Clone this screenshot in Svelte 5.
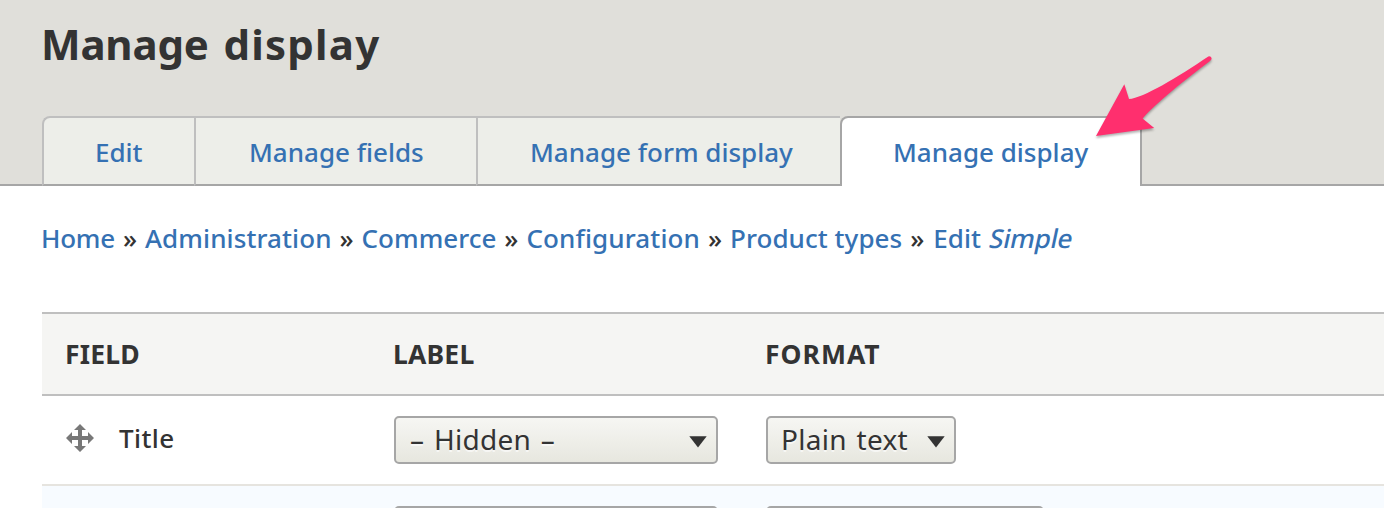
<script>
  const tabs = [
    { name: 'Edit', kind: 'edit' },
    { name: 'Manage fields', kind: 'fields' },
    { name: 'Manage form display', kind: 'form' },
    { name: 'Manage display', kind: 'display' }
  ];
  const crumbs = ['Home', 'Administration', 'Commerce', 'Configuration', 'Product types'];
</script>

<div class="page">
  <header>
    <h1><span class="verb">Manage</span> <span class="noun">display</span></h1>
    <nav class="tabs">
      {#each tabs as tab}
        <a class="tab {tab.kind}"><span>{tab.name}</span></a>
      {/each}
      <div class="rest"></div>
    </nav>
    <svg class="arrow" width="130" height="100" viewBox="0 0 130 100">
      <path d="M6 86 L34.3 34.2 L39 49 C53 48 88 27 118.3 6.4 Q120.7 5.6 121.6 8 Q121.7 9.5 120 11 C96 29 66 53 52.6 68.5 L64.2 78 Z" fill="#ff2f6e" />
    </svg>
  </header>

  <nav class="crumbs">
    {#each crumbs as crumb}
      <a class={crumb.split(' ')[0].toLowerCase()}>{crumb}</a><b>»</b>
    {/each}
    <a class="last">Edit <em>Simple</em></a>
  </nav>

  <div class="table">
    <div class="row head">
      <div class="field">Field</div>
      <div class="label">Label</div>
      <div class="format">Format</div>
    </div>
    <div class="row body">
      <div class="field">
        <svg class="move" width="28" height="28" viewBox="0 0 28 28">
          <path d="M14 0 L20 6 H16 V12 H22 V8 L28 14 L22 20 V16 H16 V22 H20 L14 28 L8 22 H12 V16 H6 V20 L0 14 L6 8 V12 H12 V6 H8 Z" fill="#787878" />
        </svg>
        <span class="name">Title</span>
      </div>
      <div class="label">
        <div class="select wide">
          <span class="hidden">– Hidden –</span>
          <svg width="18" height="12" viewBox="0 0 18 12"><path d="M0.3 0.3 H17.7 L9 11.6 Z" fill="#333" /></svg>
        </div>
      </div>
      <div class="format">
        <div class="select plain">
          <span class="text">Plain text</span>
          <svg width="18" height="12" viewBox="0 0 18 12"><path d="M0.3 0.3 H17.7 L9 11.6 Z" fill="#333" /></svg>
        </div>
      </div>
    </div>
    <div class="row body even">
      <div class="field"></div>
      <div class="label"><div class="select wide"></div></div>
      <div class="format"><div class="select long"></div></div>
    </div>
  </div>
</div>

<style>
  :global(body) { margin: 0; overflow: hidden; }
  .page {
    height: 508px;
    overflow: hidden;
    background: #fff;
    color: #333;
    font: 26px/36px "Noto Sans", "Open Sans", sans-serif;
    white-space: nowrap;
  }
  header {
    position: relative;
    box-sizing: border-box;
    height: 186px;
    background: linear-gradient(#a6a6a6, #a6a6a6) 0 100% / 42px 2px no-repeat #e0dfda;
    padding: 15px 0 0 41px;
  }
  h1 {
    margin: 0 0 41px;
    height: 60px;
    font-size: 42px;
    line-height: 58px;
    font-weight: 700;
    word-spacing: 4px;
  }
  .verb { letter-spacing: -0.2px; }
  .noun { letter-spacing: 1.2px; }
  a { color: #3571b3; }
  .tabs { display: flex; height: 70px; margin-left: 1px; }
  .tab {
    box-sizing: border-box;
    background: #edeee9;
    border-top: 2px solid #bfbfbf;
    border-bottom: 2px solid #a6a6a6;
    border-left: 2px solid #bfbfbf;
    line-height: 68px;
    font-weight: 500;
  }
  .edit { width: 152px; padding-left: 51px; border-top-left-radius: 8px; }
  .fields { width: 282px; padding-left: 53px; }
  .form { width: 364px; padding-left: 52px; }
  .display {
    width: 302px;
    padding-left: 51px;
    background: linear-gradient(#fff, #fff) padding-box, linear-gradient(#edeee9, #edeee9) 0 0 / 8px 8px no-repeat border-box;
    border: 2px solid #a6a6a6;
    border-bottom: 0;
    border-radius: 8px 0 0 0;
  }
  .rest { flex: 1; border-bottom: 2px solid #a6a6a6; }
  .arrow {
    position: absolute;
    left: 1090px;
    top: 50px;
    filter: drop-shadow(0 2px 1px rgba(0, 0, 0, 0.3));
  }
  .crumbs {
    display: flex;
    box-sizing: border-box;
    height: 126px;
    padding: 34px 0 0 41px;
    font-weight: 500;
  }
  .crumbs b { font-weight: 500; margin: 0 8px; }
  .home { letter-spacing: -0.25px; }
  .administration { letter-spacing: 0.1px; }
  .configuration { letter-spacing: 0.13px; }
  .product { letter-spacing: 0.05px; }
  .last { word-spacing: 1px; padding-left: 1px; }
  .crumbs em { display: inline-block; font-style: normal; transform: skewX(-12deg); letter-spacing: -0.2px; margin-left: 1px; }
  .table { margin-left: 42px; border-top: 2px solid #bfbfbf; }
  .row { display: grid; grid-template-columns: 352px 372px 1fr; box-sizing: border-box; }
  .head {
    height: 82px;
    background: #f5f5f3;
    border-bottom: 2px solid #bfbfbf;
    text-transform: uppercase;
    font-weight: 700;
    font-size: 26.5px;
    line-height: 80px;
    letter-spacing: 0.2px;
    text-indent: -1px;
  }
  .head .format { letter-spacing: 1px; }
  .head .field { padding-left: 24px; }
  .body { height: 90px; border-bottom: 2px solid #e6e4df; padding-top: 20px; }
  .even { background: #f7fbff; }
  .body .field { display: flex; padding: 8px 0 0 24px; }
  .name { margin: -4px 0 0 25px; font-weight: 500; letter-spacing: 0.4px; }
  .select {
    box-sizing: border-box;
    display: flex;
    justify-content: space-between;
    height: 48px;
    border: 2px solid #a6a6a6;
    border-radius: 5px;
    background: linear-gradient(#f6f6f3, #e7e7df);
    padding: 0 9px 0 13px;
    font-size: 28px;
    line-height: 43px;
    letter-spacing: 0.3px;
    word-spacing: 2px;
    text-shadow: 0 2px 0 rgba(255, 255, 255, 0.6);
  }
  .hidden { padding-left: 1px; }
  .select svg { margin-top: 18px; }
  .wide { width: 324px; }
  .plain { width: 190px; }
  .long { width: 278px; }
</style>
